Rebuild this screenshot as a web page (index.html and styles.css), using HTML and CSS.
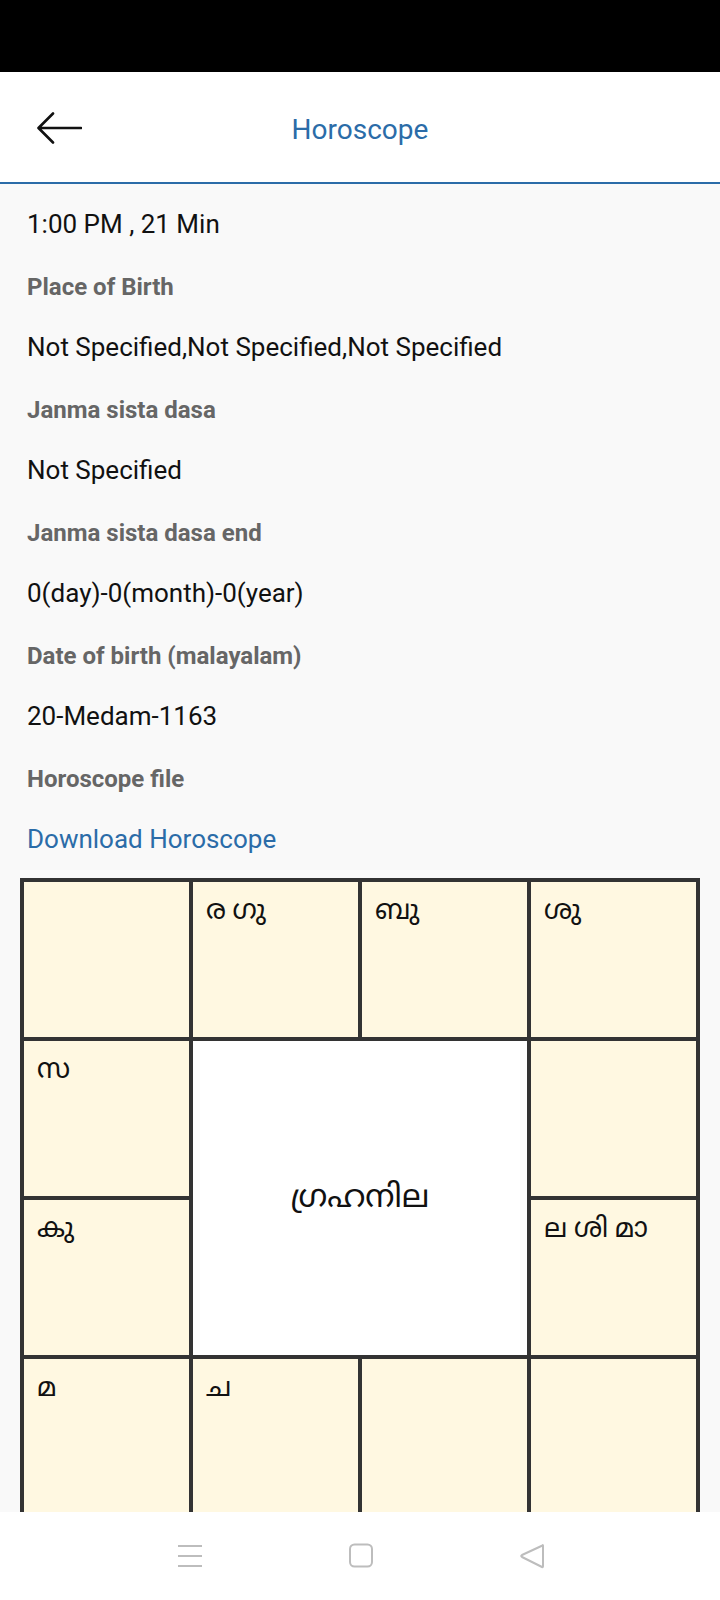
FILE: index.html
```html
<!DOCTYPE html>
<html lang="en">
<head>
<meta charset="utf-8">
<title>Horoscope</title>
<link rel="stylesheet" href="styles.css">
</head>
<body>
<div class="screen">
  <div class="status-bar"></div>
  <header class="app-bar">
    <button class="back" aria-label="Back">
      <svg width="46" height="32" viewBox="0 0 46 32">
        <path d="M45 16 H3 M17 1.5 L2.5 16 L17 30.5" fill="none" stroke="#111" stroke-width="2.6" stroke-linecap="round" stroke-linejoin="round"/>
      </svg>
    </button>
    <h1 class="title">Horoscope</h1>
    <span></span>
  </header>
  <main class="content">
    <div class="fields">
      <div class="value">1:00 PM , 21 Min</div>
      <div class="label">Place of Birth</div>
      <div class="value">Not Specified,Not Specified,Not Specified</div>
      <div class="label">Janma sista dasa</div>
      <div class="value">Not Specified</div>
      <div class="label">Janma sista dasa end</div>
      <div class="value">0(day)-0(month)-0(year)</div>
      <div class="label">Date of birth (malayalam)</div>
      <div class="value">20-Medam-1163</div>
      <div class="label">Horoscope file</div>
      <div class="value link">Download Horoscope</div>
    </div>
    <div class="chart">
      <div class="cell"></div>
      <div class="cell">ര ഗു</div>
      <div class="cell">ബു</div>
      <div class="cell">ശു</div>
      <div class="cell">സ</div>
      <div class="center">ഗ്രഹനില</div>
      <div class="cell"></div>
      <div class="cell">കു</div>
      <div class="cell">ല ശി മാ</div>
      <div class="cell">മ</div>
      <div class="cell">ച</div>
      <div class="cell"></div>
      <div class="cell"></div>
    </div>
  </main>
  <nav class="nav-bar">
    <svg class="nav-icon" width="24" height="26" viewBox="0 0 24 26">
      <path d="M0 3 H24 M0 13 H24 M0 23 H24" stroke="#bdbdbd" stroke-width="2"/>
    </svg>
    <svg class="nav-icon" width="24" height="26" viewBox="0 0 24 26">
      <rect x="1" y="1.5" width="22" height="22" rx="4.5" fill="none" stroke="#bdbdbd" stroke-width="2"/>
    </svg>
    <svg class="nav-icon" width="24" height="26" viewBox="0 0 24 26">
      <path d="M22.5 2.5 Q23 1.5 23 3 V23 Q23 24.5 22 24 L2 14 Q0.5 13 2 12 Z" fill="none" stroke="#bdbdbd" stroke-width="2" stroke-linejoin="round"/>
    </svg>
  </nav>
</div>
</body>
</html>
```
FILE: styles.css
```css
* {
  box-sizing: border-box;
}

html, body {
  margin: 0;
  padding: 0;
}

body {
  font-family: Roboto, "Noto Sans Malayalam", "Noto Sans", sans-serif;
  background: #f9f9f9;
  color: #111;
}

.screen {
  width: 720px;
  height: 1600px;
  display: flex;
  flex-direction: column;
  overflow: hidden;
}

.status-bar {
  height: 72px;
  flex: none;
  background: #000;
}

.app-bar {
  height: 112px;
  flex: none;
  background: #fff;
  border-bottom: 2px solid #2b6ca8;
  display: grid;
  grid-template-columns: 1fr auto 1fr;
  align-items: center;
}

.back {
  justify-self: start;
  margin-left: 36px;
  margin-top: 2px;
  padding: 0;
  border: 0;
  background: none;
  width: 46px;
  height: 32px;
  display: flex;
}

.title {
  margin: 4px 0 0;
  font-size: 28px;
  font-weight: 400;
  color: #2b6ca8;
}

.content {
  flex: 1;
  min-height: 0;
  overflow: hidden;
  padding: 10px 20px 0;
}

.fields {
  display: flex;
  flex-direction: column;
  padding-left: 7px;
}

.value {
  height: 60px;
  line-height: 60px;
  font-size: 26px;
  color: #111;
  margin-bottom: 3px;
}

.label {
  height: 60px;
  line-height: 60px;
  font-size: 24px;
  font-weight: 700;
  color: #666;
}

.link {
  color: #2b6ca8;
}

.chart {
  margin-top: 6px;
  width: 680px;
  display: grid;
  grid-template-columns: repeat(4, 165px);
  grid-template-rows: repeat(4, 155px);
  gap: 4px;
  padding: 4px;
  background: #333;
}

.cell {
  background: #fff8e1;
  padding: 7px 13px;
  font-size: 27px;
  line-height: 42px;
  color: #111;
}

.center {
  grid-column: 2 / 4;
  grid-row: 2 / 4;
  background: #fff;
  display: flex;
  align-items: center;
  justify-content: center;
  font-size: 32px;
  color: #111;
}

.nav-bar {
  height: 88px;
  flex: none;
  background: #fff;
  display: flex;
  justify-content: center;
  align-items: center;
  gap: 147px;
  padding-left: 2px;
}

.nav-icon {
  display: block;
}
```
